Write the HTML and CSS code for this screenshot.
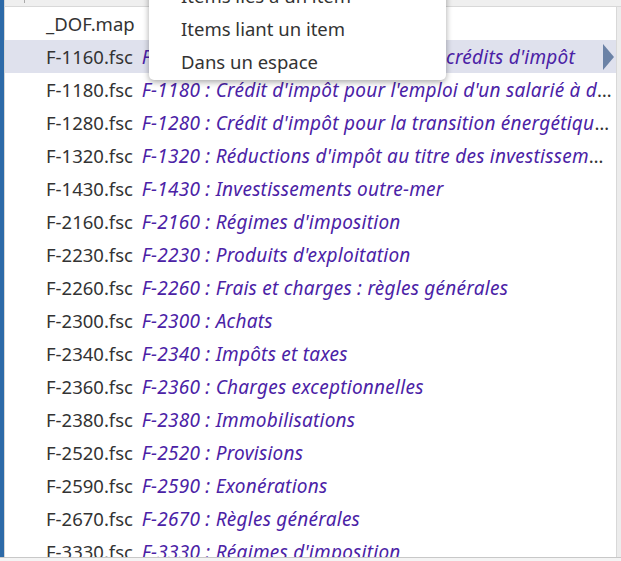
FILE: index.html
```html
<!DOCTYPE html>
<html lang="fr">
<head>
  <meta charset="UTF-8">
  <title>Fichiers</title>
  <link rel="stylesheet" href="styles.css">
</head>
<body>
  <div class="app">
    <div class="side"></div>
    <div class="main">
      <div class="topbar"><span class="tick"></span></div>
      <div class="body">
        <ul class="list">
          <li class="row"><span class="file">_DOF.map</span></li>
          <li class="row active"><span class="file">F-1160.fsc</span> <span class="desc">F-1160 : Les réductions d'impôts et crédits d'impôt</span><span class="arrow"></span></li>
          <li class="row"><span class="file">F-1180.fsc</span> <span class="desc">F-1180 : Crédit d'impôt pour l'emploi d'un salarié à domicile</span></li>
          <li class="row"><span class="file">F-1280.fsc</span> <span class="desc">F-1280 : Crédit d'impôt pour la transition énergétique (CITE)</span></li>
          <li class="row"><span class="file">F-1320.fsc</span> <span class="desc">F-1320 : Réductions d'impôt au titre des investissements</span></li>
          <li class="row"><span class="file">F-1430.fsc</span> <span class="desc">F-1430 : Investissements outre-mer</span></li>
          <li class="row"><span class="file">F-2160.fsc</span> <span class="desc">F-2160 : Régimes d'imposition</span></li>
          <li class="row"><span class="file">F-2230.fsc</span> <span class="desc">F-2230 : Produits d'exploitation</span></li>
          <li class="row"><span class="file">F-2260.fsc</span> <span class="desc">F-2260 : Frais et charges : règles générales</span></li>
          <li class="row"><span class="file">F-2300.fsc</span> <span class="desc">F-2300 : Achats</span></li>
          <li class="row"><span class="file">F-2340.fsc</span> <span class="desc">F-2340 : Impôts et taxes</span></li>
          <li class="row"><span class="file">F-2360.fsc</span> <span class="desc">F-2360 : Charges exceptionnelles</span></li>
          <li class="row"><span class="file">F-2380.fsc</span> <span class="desc">F-2380 : Immobilisations</span></li>
          <li class="row"><span class="file">F-2520.fsc</span> <span class="desc">F-2520 : Provisions</span></li>
          <li class="row"><span class="file">F-2590.fsc</span> <span class="desc">F-2590 : Exonérations</span></li>
          <li class="row"><span class="file">F-2670.fsc</span> <span class="desc">F-2670 : Règles générales</span></li>
          <li class="row"><span class="file">F-3330.fsc</span> <span class="desc">F-3330 : Régimes d'imposition</span></li>
        </ul>
        <div class="scroll"></div>
      </div>
    </div>
  </div>

  <!-- Menu contextuel -->
  <div class="menu">
    <div class="menu-item">Items liés à un item</div>
    <div class="menu-item">Items liant un item</div>
    <div class="menu-item">Dans un espace</div>
  </div>
</body>
</html>
```

FILE: styles.css
```css
* { box-sizing: border-box; }
body {
  margin: 0;
  background: #f4f4f4;
  font-family: "Noto Sans", "Open Sans", sans-serif;
  font-size: 18.5px;
  color: #333;
  overflow: hidden;
}

.app {
  display: flex;
  height: 558px;
  border-bottom: 1px solid #c8c8c8;
}
.side {
  width: 5px;
  flex: none;
  background: #2d6aa8;
  border-right: 1px solid #d6d6d6;
}
.main {
  flex: 1;
  display: flex;
  flex-direction: column;
  min-width: 0;
  background: #fff;
}
.topbar {
  height: 7px;
  flex: none;
  background: #efefef;
  border-bottom: 1px solid #d8d8d8;
  position: relative;
}
.topbar .tick {
  position: absolute;
  left: 19px;
  top: 0;
  width: 1px;
  height: 3px;
  background: #aaa;
}
.body {
  flex: 1;
  display: flex;
  overflow: hidden;
}
.list {
  flex: 1;
  min-width: 0;
  margin: 0;
  padding: 0;
  list-style: none;
}
.scroll {
  width: 5px;
  flex: none;
  background: #ececec;
  border-left: 1px solid #d8d8d8;
}

/* Lignes */
.row {
  height: 33px;
  line-height: 33px;
  padding: 0 4px 0 41px;
  white-space: nowrap;
  overflow: hidden;
  text-overflow: ellipsis;
  position: relative;
}
.row.active { background: #dfe1ed; padding-right: 22px; }
.file { color: #333; }
.desc {
  color: #4b22a6;
  font-style: italic;
  font-size: 19px;
  letter-spacing: 0.25px;
  margin-left: 4px;
}
.arrow {
  position: absolute;
  right: 2px;
  top: 4px;
  width: 0;
  height: 0;
  border-top: 13px solid transparent;
  border-bottom: 13px solid transparent;
  border-left: 11px solid #6b82a6;
}

/* Menu */
.menu {
  position: absolute;
  left: 149px;
  top: -21px;
  width: 297px;
  background: #fff;
  border-radius: 5px;
  box-shadow: 0 2px 6px rgba(0, 0, 0, 0.35);
  padding: 0 0 2px 0;
}
.menu-item {
  height: 33px;
  line-height: 33px;
  padding-left: 32px;
  color: #333;
}
```
